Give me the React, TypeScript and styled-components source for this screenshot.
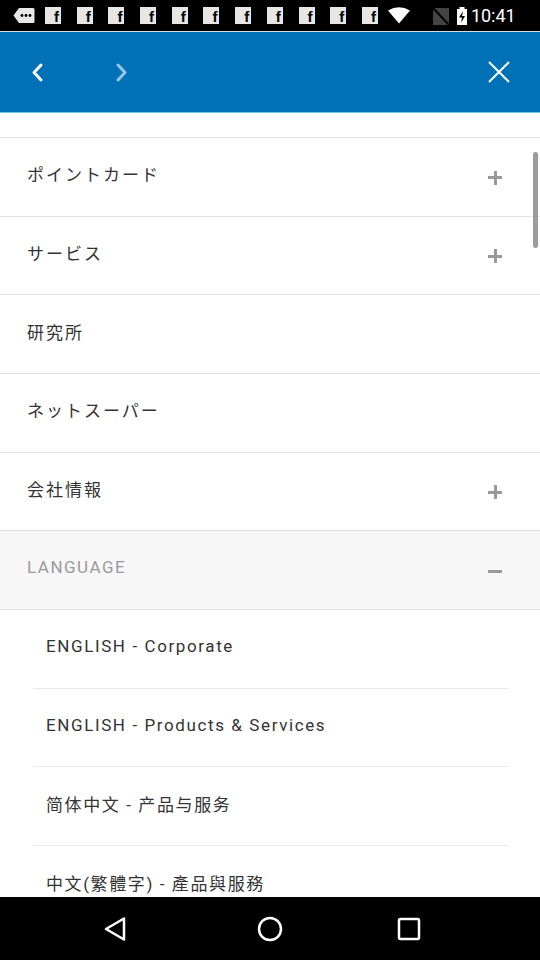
import styled, { createGlobalStyle } from "styled-components";

const GlobalStyle = createGlobalStyle`
  html, body {
    margin: 0;
    padding: 0;
    background: #ffffff;
  }
  body {
    font-family: Roboto, "Noto Sans CJK JP", sans-serif;
  }
`;

const Screen = styled.div`
  width: 540px;
  height: 960px;
  display: flex;
  flex-direction: column;
  overflow: hidden;
  background: #ffffff;
`;

const StatusBar = styled.div`
  height: 31px;
  background: #000;
  border-bottom: 1px solid #cfdfe9;
  display: flex;
  align-items: center;
  padding: 0 0 0 13px;
`;

const Notifs = styled.div`
  display: flex;
  align-items: center;
  gap: 15.7px;
  margin-left: 10px;
`;

const FbIcon = styled.div`
  width: 16px;
  height: 17px;
  background: #e6e6e6;
  color: #000;
  font: bold 15px "Liberation Sans", sans-serif;
  display: flex;
  align-items: flex-end;
  justify-content: flex-end;
  padding-right: 2px;
  box-sizing: border-box;
  line-height: 14px;
  overflow: hidden;
`;

const StatusRight = styled.div`
  margin-left: 10px;
  display: flex;
  align-items: center;
`;

const StatusGlyph = styled.svg<{ $ml: number }>`
  margin-left: ${(p) => p.$ml}px;
  flex: none;
`;

const Clock = styled.span`
  color: #fff;
  font-size: 18px;
  font-family: Roboto, sans-serif;
  margin-left: 4px;
`;

const Header = styled.div`
  height: 80px;
  background: #0071b7;
  border-bottom: 1px solid #75c2ec;
  display: flex;
  align-items: center;
  padding: 0 28px 0 24px;
`;

const NavButton = styled.button<{ $dim?: boolean }>`
  background: none;
  border: 0;
  padding: 0;
  width: 26px;
  height: 30px;
  display: flex;
  align-items: center;
  justify-content: center;
  opacity: ${(p) => (p.$dim ? 0.6 : 1)};
  margin-right: ${(p) => (p.$dim ? 0 : "58px")};
`;

const CloseButton = styled(NavButton)`
  margin-left: auto;
  margin-right: 0;
`;

const Content = styled.div`
  position: relative;
  flex: 1;
  overflow: hidden;
  padding-top: 24px;
`;

const List = styled.div`
  border-top: 1px solid #e3e3e3;
`;

const Row = styled.div<{ $shaded?: boolean }>`
  height: 78.67px;
  box-sizing: border-box;
  border-bottom: 1px solid #e3e3e3;
  background: ${(p) => (p.$shaded ? "#f7f7f7" : "#fff")};
  display: flex;
  align-items: center;
  padding: 0 38px 6px 27px;
`;

const RowLabel = styled.span<{ $muted?: boolean }>`
  font-size: 17px;
  color: ${(p) => (p.$muted ? "#9a9a9a" : "#333")};
  letter-spacing: ${(p) => (p.$muted ? "1.5px" : "2px")};
  font-family: Roboto, "Noto Sans CJK JP", sans-serif;
`;

const Toggle = styled.span`
  margin-left: auto;
  width: 14px;
  height: 14px;
  position: relative;
  margin-top: 8px;
`;

const Bar = styled.span<{ $vertical?: boolean }>`
  position: absolute;
  background: #999;
  ${(p) =>
    p.$vertical
      ? "left: 5.5px; top: 0; width: 3px; height: 14px;"
      : "left: 0; top: 5.5px; width: 14px; height: 3px;"}
`;

const SubList = styled.div`
  padding: 0 32px 0 33px;
`;

const SubRow = styled.div<{ $last?: boolean }>`
  height: 78.67px;
  box-sizing: border-box;
  border-bottom: ${(p) => (p.$last ? "none" : "1px solid #e8e8e8")};
  display: flex;
  align-items: center;
  padding: 0 0 5px 13px;
`;

const SubLabel = styled.span`
  font-size: 17px;
  color: #333;
  letter-spacing: 1.6px;
  font-family: Roboto, "Noto Sans CJK SC", sans-serif;
`;

const Scrollbar = styled.div`
  position: absolute;
  right: 2px;
  top: 39px;
  width: 5px;
  height: 96px;
  border-radius: 3px;
  background: #9c9c9c;
`;

const NavBar = styled.div`
  height: 63px;
  background: #000;
  display: flex;
  align-items: center;
  padding-left: 103px;
`;

const NavKey = styled.svg<{ $ml: number }>`
  margin-left: ${(p) => p.$ml}px;
`;

function Chevron({ dir }: { dir: "left" | "right" }) {
  const d = dir === "left" ? "M12 3 L5 10.5 L12 18" : "M5 3 L12 10.5 L5 18";
  return (
    <svg width="17" height="21" viewBox="0 0 17 21">
      <path d={d} fill="none" stroke="#fff" strokeWidth="3" strokeLinecap="round" strokeLinejoin="round" />
    </svg>
  );
}

function Plus() {
  return (
    <Toggle>
      <Bar />
      <Bar $vertical />
    </Toggle>
  );
}

function Minus() {
  return (
    <Toggle>
      <Bar />
    </Toggle>
  );
}

const mainRows: { label: string; plus: boolean }[] = [
  { label: "ポイントカード", plus: true },
  { label: "サービス", plus: true },
  { label: "研究所", plus: false },
  { label: "ネットスーパー", plus: false },
  { label: "会社情報", plus: true },
];

const languages = [
  "ENGLISH - Corporate",
  "ENGLISH - Products & Services",
  "简体中文 - 产品与服务",
  "中文(繁體字) - 產品與服務",
];

export default function App() {
  return (
    <Screen>
      <GlobalStyle />
      <StatusBar>
        <svg width="22" height="17" viewBox="0 0 22 17">
          <path d="M6 1 H20 a1.5 1.5 0 0 1 1.5 1.5 V14.5 a1.5 1.5 0 0 1 -1.5 1.5 H6 L0.5 8.5 Z" fill="#e8e8e8" />
          <circle cx="9" cy="8.5" r="1.4" fill="#000" />
          <circle cx="13" cy="8.5" r="1.4" fill="#000" />
          <circle cx="17" cy="8.5" r="1.4" fill="#000" />
        </svg>
        <Notifs>
          {Array.from({ length: 11 }).map((_, i) => (
            <FbIcon key={i}>f</FbIcon>
          ))}
        </Notifs>
        <StatusRight>
          <StatusGlyph $ml={0} width="22" height="17" viewBox="0 0 22 17">
            <path d="M0 3.5 Q11 -3 22 3.5 L11 16.5 Z" fill="#fff" />
          </StatusGlyph>
          <StatusGlyph $ml={23} width="16" height="18" viewBox="0 0 16 18">
            <rect x="0" y="1" width="16" height="17" fill="#444" />
            <path d="M0 1 L16 18" stroke="#000" strokeWidth="2" />
          </StatusGlyph>
          <StatusGlyph $ml={8} width="10" height="18" viewBox="0 0 10 18">
            <rect x="2.5" y="0" width="5" height="2" fill="#fff" />
            <rect x="0" y="2" width="10" height="16" fill="#fff" />
            <path d="M6 4 L2 10.5 H5 L4 16 L8 9 H5 Z" fill="#000" />
          </StatusGlyph>
          <Clock>10:41</Clock>
        </StatusRight>
      </StatusBar>

      <Header>
        <NavButton>
          <Chevron dir="left" />
        </NavButton>
        <NavButton $dim>
          <Chevron dir="right" />
        </NavButton>
        <CloseButton>
          <svg width="24" height="24" viewBox="0 0 24 24">
            <path d="M2 2 L22 22 M22 2 L2 22" stroke="#fff" strokeWidth="2" />
          </svg>
        </CloseButton>
      </Header>

      <Content>
        <List>
          {mainRows.map((r) => (
            <Row key={r.label}>
              <RowLabel>{r.label}</RowLabel>
              {r.plus && <Plus />}
            </Row>
          ))}
          <Row $shaded>
            <RowLabel $muted>LANGUAGE</RowLabel>
            <Minus />
          </Row>
        </List>
        <SubList>
          {languages.map((l, i) => (
            <SubRow key={l} $last={i === languages.length - 1}>
              <SubLabel>{l}</SubLabel>
            </SubRow>
          ))}
        </SubList>
        <Scrollbar />
      </Content>

      <NavBar>
        <NavKey $ml={0} width="24" height="26" viewBox="0 0 24 26">
          <path d="M21 2.5 L3 13 L21 23.5 Z" fill="none" stroke="#fff" strokeWidth="2.5" strokeLinejoin="round" />
        </NavKey>
        <NavKey $ml={130} width="26" height="26" viewBox="0 0 26 26">
          <circle cx="13" cy="13" r="11" fill="none" stroke="#fff" strokeWidth="2.5" />
        </NavKey>
        <NavKey $ml={114} width="24" height="24" viewBox="0 0 24 24">
          <rect x="2" y="2" width="20" height="20" rx="1.5" fill="none" stroke="#fff" strokeWidth="2.5" />
        </NavKey>
      </NavBar>
    </Screen>
  );
}
